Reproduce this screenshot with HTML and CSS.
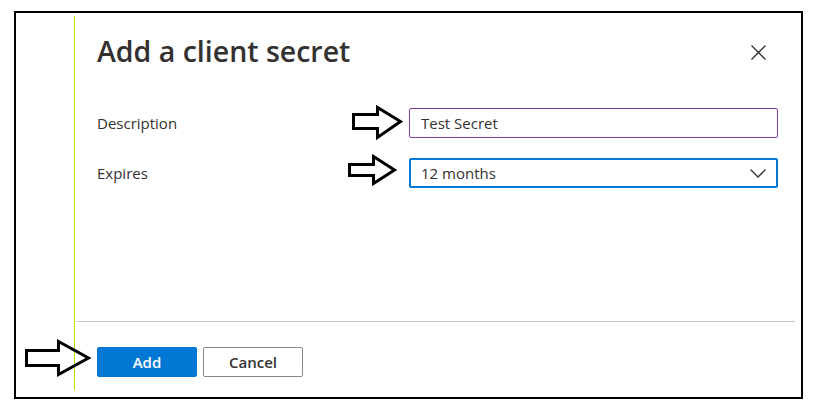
FILE: index.html
```html
<!DOCTYPE html>
<html>
<head>
<meta charset="utf-8">
<link rel="stylesheet" href="styles.css">
</head>
<body>
<div class="frame">
  <div class="gutter"></div>
  <div class="panel">
    <div class="header">
      <h1 class="title">Add a client secret</h1>
      <button class="close" aria-label="Close">
        <svg width="15" height="15" viewBox="0 0 15 15"><path d="M0.5 0.5 L14.5 14.5 M14.5 0.5 L0.5 14.5" stroke="#323130" stroke-width="1.3" fill="none"/></svg>
      </button>
    </div>
    <div class="body">
      <div class="row">
        <label class="label">Description</label>
        <div class="field input">Test Secret</div>
      </div>
      <div class="row">
        <label class="label">Expires</label>
        <div class="field select"><span>12 months</span>
          <svg width="16" height="9" viewBox="0 0 16 9"><path d="M0.5 0.5 L8 8 L15.5 0.5" stroke="#323130" stroke-width="1.3" fill="none"/></svg>
        </div>
      </div>
    </div>
    <div class="sep"></div>
    <div class="footer">
      <button class="btn primary">Add</button>
      <button class="btn secondary">Cancel</button>
    </div>
  </div>
</div>
<svg class="arrows" width="815" height="409" viewBox="0 0 815 409">
  <g fill="none" stroke="#000" stroke-width="3" stroke-linejoin="miter">
    <path d="M353.5 114.5 L377.5 114.5 L377.5 107.5 L400.5 121.5 L377.5 137.5 L377.5 128.5 L353.5 128.5 Z"/>
    <path d="M349.5 164.5 L373.5 164.5 L373.5 156.5 L394.5 170 L373.5 183.5 L373.5 175.5 L349.5 175.5 Z"/>
    <path d="M26.5 350.5 L58.5 350.5 L58.5 341.5 L88.5 358 L58.5 374.5 L58.5 365.5 L26.5 365.5 Z"/>
  </g>
</svg>
</body>
</html>
```

FILE: styles.css
```css
* { box-sizing: border-box; }
html, body { margin: 0; padding: 0; background: #fff; }
body {
  font-family: "Open Sans", "Noto Sans", sans-serif;
  color: #323130;
  width: 815px;
  height: 409px;
  position: relative;
  overflow: hidden;
}
.frame {
  margin: 11px 0 0 14px;
  width: 789px;
  height: 388px;
  border: 2px solid #000;
  display: flex;
  padding: 3px 0 7px 0;
}
.gutter { width: 58px; flex: none; }
.panel {
  flex: 1;
  border-left: 1px solid #c2dc00;
  display: flex;
  flex-direction: column;
}
.header {
  display: flex;
  justify-content: space-between;
  padding: 17px 32px 0 22px;
  height: 92px;
  align-items: flex-start;
}
.title {
  margin: 0;
  font-size: 28.5px;
  line-height: 36px;
  font-weight: 600;
  letter-spacing: 0;
}
.close {
  border: 0;
  background: none;
  padding: 0;
  width: 22px;
  height: 22px;
  margin-top: 8px;
  display: flex;
  align-items: center;
  justify-content: center;
}
.close svg { display: block; }
.body {
  flex: 1;
  padding: 0 23px 0 22px;
  display: flex;
  flex-direction: column;
  gap: 20px;
}
.row {
  display: flex;
  align-items: center;
  height: 30px;
}
.label {
  width: 312px;
  flex: none;
  font-size: 15px;
}
.field {
  flex: 1;
  height: 30px;
  font-size: 15px;
  display: flex;
  align-items: center;
  border-radius: 2px;
}
.input {
  border: 1px solid #8a3fa8;
  padding-left: 11px;
}
.select {
  border: 2px solid #0078d4;
  padding: 0 10px 0 10px;
  justify-content: space-between;
}
.select svg { display: block; margin-top: 1px; }
.sep {
  height: 1px;
  background: #c8c8c8;
  margin: 0 6px 0 1px;
}
.footer {
  display: flex;
  gap: 6px;
  padding: 25px 22px 13px 22px;
}
.btn {
  width: 100px;
  height: 30px;
  font-family: inherit;
  font-size: 15px;
  font-weight: 600;
  border-radius: 2px;
  padding: 0;
}
.primary {
  background: #0078d4;
  color: #fff;
  border: 1px solid #0078d4;
}
.secondary {
  background: #fff;
  color: #323130;
  border: 1px solid #8a8886;
}
.arrows {
  position: absolute;
  left: 0;
  top: 0;
  pointer-events: none;
}
```
